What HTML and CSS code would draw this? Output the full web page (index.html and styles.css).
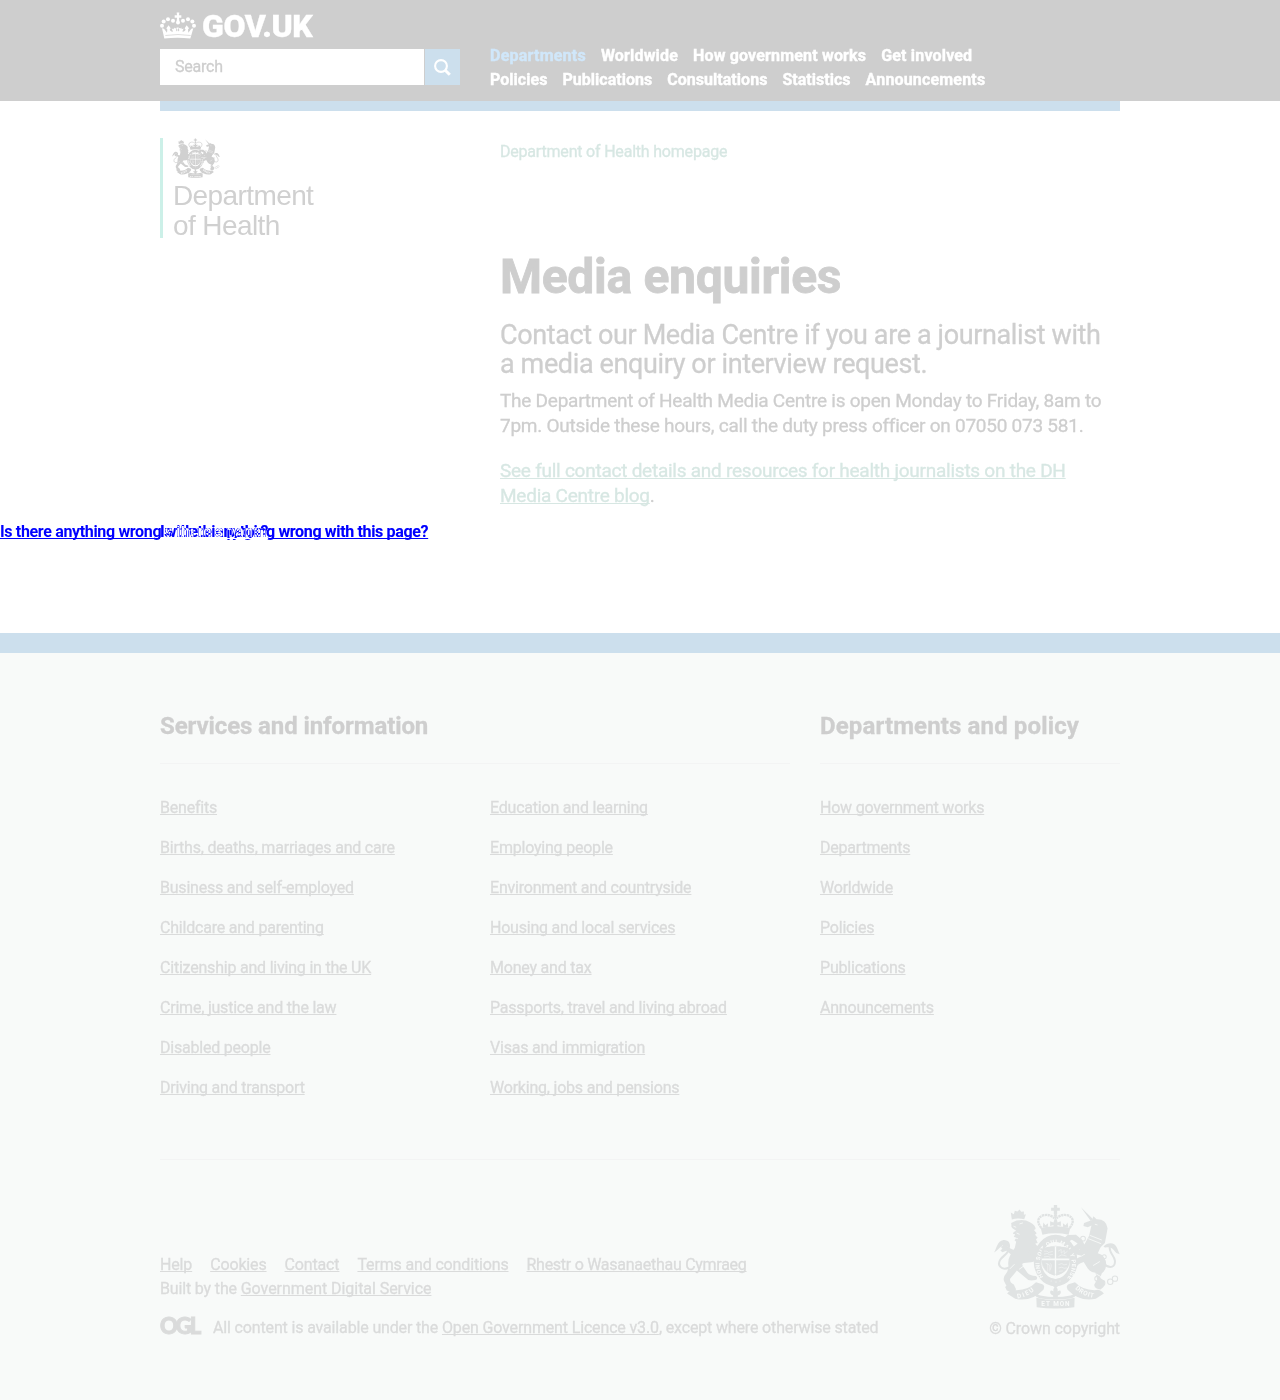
FILE: index.html
```html
<!DOCTYPE html>
<html lang="en">
<head>
<meta charset="utf-8">
<title>Media enquiries - Department of Health - GOV.UK</title>
<link rel="stylesheet" href="styles.css">
</head>
<body>
<svg class="defs" aria-hidden="true">
  <symbol id="arms" viewBox="45 27 375 312">
    <!-- crown -->
    <g fill="currentColor">
      <path d="M223 30h10v8h8v9h-8v10h-10V47h-8v-9h8z"/>
      <circle cx="228" cy="61" r="5"/>
      <path d="M184 98q44-10 88 0l-5 20q-39-8-78 0z"/>
      <path d="M225 72h7l2 10 10-4v14l-10-3v11h-12V89l-10 3V78l10 4z"/>
      <path d="M190 97l2-15 6 8 8-6-1 13zM266 97l-2-15-6 8-8-6 1 13z"/>
    </g>
    <g fill="none" stroke="currentColor" stroke-width="7" stroke-dasharray="7 1.5">
      <path d="M186 98c-16-18-10-34 8-38 14-3 25 3 31 10M270 98c16-18 10-34-8-38-14-3-25 3-31 10"/>
      <path d="M228 65v35" stroke-width="4"/>
    </g>
    <!-- lion -->
    <g fill="currentColor">
      <path d="M98 73l-3-21 9 5 3-10 8 2 6-6 5 7 8-1 0 10 6-2-5 15q-18-5-37 1z"/>
      <path d="M96 83l16-7q24-5 40 5 16 8 17 20l-5 3 8 10-5 4 8 9-5 5 5 11-7 1q8 10 4 20l-2 24q0 9-14 12l-22 2q-8 1-3 10l14 20q7 8 24 9 8 3 2 11-14 4-24 1l-34-28-5 6-15 18q-2 11 11 17l7 15q-13 10-28 3l-5-10 4-4-7-13q-4-13 5-22 9-12 8-23-3-19 6-34l13-21 4-18-5-4 5-7-7-4 4-7-7-2q1-6 10-9l-10-6q-6-6-4-9z"/>
      <path d="M104 184l-22-18-12 4-6-5 6-5-5-6 7-3-1-8 9 2 9 12 20 9z"/>
      <path d="M148 170l20-21 12 4-5 12-16 22z"/>
      <path d="M45 171c9-13 9-34 28-37 15-1 22 10 19 24-8-8-16-12-23-7-9 6-14 15-24 20z"/>
    </g>
    <path d="M92 215C65 228 54 207 64 192c9-14 29-17 24-44" fill="none" stroke="currentColor" stroke-width="6"/>
    <path class="cut" d="M121 86l10-3M103 93l8 3M112 113l9 4M105 127l11 3M142 205l-22 16M92 220l14-14" />
    <!-- unicorn -->
    <g fill="currentColor">
      <path d="M303 36l37 36-7 5z"/>
      <path d="M337 74l4-11 9 9q29-1 33 27l-4 23-4 21q-13 12-16 19l-5 11q25 7 25 35-1 16-13 25l-5 13 13 11q3 16-12 24-16 0-19-13l9-17-5-20q-14 0-23-12l-12-20q-22 5-23 24l-5 8-13-3 2-13q8-26 34-33l9-6-17-14-11 8q-15-2-9-14l15-12-17-11-16 8-6-14 9-8 25-1 18 15 7 14 14-26 7-30-11 5-13-4 2-9z"/>
      <path d="M371 153c13-13 33-13 40 4l8 19c-17-3-15-15-27-19-9-4-17 2-21-4z"/>
      <path d="M282 158l18 6 19-7 7 10-20 14-25-6z"/>
    </g>
    <path d="M371 205c22 17 35 8 34-9-1-17-20-23-15-46" fill="none" stroke="currentColor" stroke-width="6"/>
    <path class="cut" d="M330 120l36 14M326 130l38 15M345 87l8 2M340 210l20-12M349 235l16 9"/>
    <g fill="none" stroke="currentColor" stroke-width="3">
      <circle cx="352" cy="249" r="7"/><circle cx="367" cy="262" r="8"/><circle cx="391" cy="258" r="8"/><circle cx="405" cy="249" r="8"/><circle cx="310" cy="130" r="7"/><circle cx="373" cy="184" r="6"/>
    </g>
    <!-- garter and shield -->
    <ellipse cx="228" cy="195" rx="54" ry="66" fill="none" stroke="currentColor" stroke-width="22"/>
    <path id="garter" d="M194 247a48 60 0 1 1 70-1" fill="none"/>
    <text class="arms-motto"><textPath href="#garter" startOffset="4" textLength="255">HONI SOIT QUI MAL Y PENSE</textPath></text>
    <circle cx="228" cy="194" r="42" fill="none" stroke="currentColor" stroke-width="2"/>
    <g fill="currentColor">
      <path d="M190 158q18-6 36-4v35h-40q-2-19 4-31zM230 154q20-2 37 4 6 12 4 31h-41zM186 194h40v46q-34-8-40-46zM230 194h41q-5 38-41 46z"/>
      <path d="M200 243l28 8 28-8-9 21-19 12-19-12z"/>
    </g>
    <path class="cut cut-fine" d="M194 167h9l4 4 13-3M194 176l10-2 6 4 10-1M194 184l13-1 6 3M237 183l10-5 14 4M236 167l9-5v11l9-8v10l10-8M199 203l12 6v19M205 203v25M212 203q7 6 0 20M237 207l10-3 6 4 10-2M237 217l10-2 7 3 8-1M238 227l12-1M213 256h5M226 259h6M239 256h5"/>
    <!-- ribbon -->
    <g fill="currentColor">
      <path d="M84 293q13-14 23-10 39 2 63-23l12 3q18 3 10 19-35 37-84 27zM372 293q-13-14-23-10-39 2-63-23l-12 3q-18 3-10 19 35 37 84 27z"/>
      <path d="M168 281q-8 14 3 22 10 8 57 8t57-8q11-8 3-22l-8 10q3 6-7 8-45 9-90 0-10-2-7-8z"/>
      <path d="M171 306q57 13 114 0l-1 28q-56 8-112 0z"/>
      <path d="M228 270q11 12 4 22 3-10 11-7 4 10-8 14v11h-14v-11q-12-4-8-14 8-3 11 7-7-10 4-22z"/>
    </g>
    <path id="dieu" d="M115 308q31-4 54-29" fill="none"/>
    <path id="droit" d="M286 279q25 24 61 28" fill="none"/>
    <text class="arms-motto arms-ribbon"><textPath href="#dieu" textLength="56">DIEU</textPath></text>
    <text class="arms-motto arms-ribbon"><textPath href="#droit" textLength="62">DROIT</textPath></text>
    <text class="arms-motto arms-ribbon" x="186" y="329" textLength="84">ET MON</text>
  </symbol>
</svg>

<header class="header">
  <div class="wrap header-inner">
    <div class="header-left">
      <a class="logo" href="#">
        <svg class="crown" viewBox="30 36 108 80" fill="#fff">
          <path d="M80 37h8l-1 8h7v8h-7l1 10h-8l1-10h-7v-8h7z"/>
          <circle cx="84" cy="67" r="6"/><circle cx="69" cy="62" r="6"/><circle cx="54" cy="57" r="6"/><circle cx="41" cy="64" r="6"/><circle cx="36" cy="77" r="6"/><circle cx="99" cy="62" r="6"/><circle cx="114" cy="57" r="6"/><circle cx="127" cy="64" r="6"/><circle cx="132" cy="77" r="6"/>
          <path d="M36 84l6 2 9 12 1-10-3-4 7-9 6 9-3 5q3 7 10 5l-4-9 6 2 1-5 3 3 5-2-2 7 3 4q3-3-1-12h6q-4 9-1 12l3-4-2-7 5 2 3-3 1 5 6-2-4 9q7 2 10-5l-3-5 6-9 7 9-3 4 1 10 9-12 6-2-9 31q-39-4-78 0z"/>
          <path d="M46 106q38-6 76 0" fill="none" stroke="#cecece" stroke-width="2"/>
        </svg>
        <span class="logo-text">GOV.UK</span>
      </a>
      <form class="search">
        <span class="search-field">Search</span>
        <span class="search-button">
          <svg viewBox="0 0 17 17" width="17" height="17" fill="none" stroke="#fff"><circle cx="7" cy="7" r="5.9" stroke-width="2.1"/><path d="M11.2 11.2l4.6 4.6" stroke-width="3"/></svg>
        </span>
      </form>
    </div>
    <nav class="nav">
      <div class="nav-row nav-primary"><a class="active" href="#">Departments</a><a href="#">Worldwide</a><a href="#">How government works</a><a href="#">Get involved</a></div>
      <div class="nav-row"><a href="#">Policies</a><a href="#">Publications</a><a href="#">Consultations</a><a href="#">Statistics</a><a class="wide" href="#">Announcements</a></div>
    </nav>
  </div>
</header>
<div class="wrap header-bar"></div>

<main class="wrap main">
  <div class="organisation">
    <svg class="organisation-arms"><use href="#arms"/></svg>
    <span>Department<br>of Health</span>
  </div>
  <article class="content">
    <a class="home-link" href="#">Department of Health homepage</a>
    <h1>Media enquiries</h1>
    <p class="lead">Contact our Media Centre if you are a journalist with<br>a media enquiry or interview request.</p>
    <p>The Department of Health Media Centre is open Monday to Friday, 8am to<br>7pm. Outside these hours, call the duty press officer on 07050 073 581.</p>
    <p><a href="#">See full contact details and resources for health journalists on the DH<br>Media Centre blog</a>.</p>
  </article>
</main>

<div class="report">
  <a href="#">Is there anything wrong with this page?</a>
  <a class="report-overlay" href="#">Is there anything wrong with this page?</a>
</div>

<footer class="footer">
  <div class="wrap">
    <div class="footer-nav">
      <section class="services">
        <h2>Services and information</h2>
        <div class="columns">
          <ul>
            <li><a href="#">Benefits</a></li>
            <li><a href="#">Births, deaths, marriages and care</a></li>
            <li><a href="#">Business and self-employed</a></li>
            <li><a href="#">Childcare and parenting</a></li>
            <li><a href="#">Citizenship and living in the UK</a></li>
            <li><a href="#">Crime, justice and the law</a></li>
            <li><a href="#">Disabled people</a></li>
            <li><a href="#">Driving and transport</a></li>
          </ul>
          <ul>
            <li><a href="#">Education and learning</a></li>
            <li><a href="#">Employing people</a></li>
            <li><a href="#">Environment and countryside</a></li>
            <li><a href="#">Housing and local services</a></li>
            <li><a href="#">Money and tax</a></li>
            <li><a href="#">Passports, travel and living abroad</a></li>
            <li><a href="#">Visas and immigration</a></li>
            <li><a href="#">Working, jobs and pensions</a></li>
          </ul>
        </div>
      </section>
      <section class="policy">
        <h2>Departments and policy</h2>
        <ul>
          <li><a href="#">How government works</a></li>
          <li><a href="#">Departments</a></li>
          <li><a href="#">Worldwide</a></li>
          <li><a href="#">Policies</a></li>
          <li><a href="#">Publications</a></li>
          <li><a href="#">Announcements</a></li>
        </ul>
      </section>
    </div>
    <div class="footer-meta">
      <div class="meta-left">
        <div class="meta-links"><a href="#">Help</a><a href="#">Cookies</a><a href="#">Contact</a><a href="#">Terms and conditions</a><a href="#">Rhestr o Wasanaethau Cymraeg</a></div>
        <div class="built">Built by the <a href="#">Government Digital Service</a></div>
        <div class="licence"><span class="ogl">OGL</span><span>All content is available under the <a href="#">Open Government Licence v3.0</a>, except where otherwise stated</span></div>
      </div>
      <div class="copyright">
        <svg class="footer-arms"><use href="#arms"/></svg>
        <span>© Crown copyright</span>
      </div>
    </div>
  </div>
</footer>
</body>
</html>
```
FILE: styles.css
```css
* { box-sizing: border-box; }
body {
  margin: 0;
  background: #fff;
  color: #cecece;
  font: 16px/20px Roboto, Arial, sans-serif;
  letter-spacing: -0.21px;
  -webkit-text-stroke: 0.3px;
}
h1, h2, p, ul { margin: 0; padding: 0; }
ul { list-style: none; }
a {
  color: inherit;
  text-decoration: underline;
  text-decoration-thickness: 1px;
  text-decoration-skip-ink: none;
  text-underline-offset: 1px;
}
.defs { display: none; }
.wrap { width: 960px; margin: 0 auto; }

.header { height: 101px; background: #cecece; }
.header-inner { display: flex; }
.header-left { width: 330px; padding-top: 12px; }
.logo {
  display: flex;
  gap: 6px;
  height: 37px;
  color: #fff;
  text-decoration: none;
}
.crown { width: 36px; height: 27px; }
.logo-text {
  font-size: 32px;
  line-height: 28px;
  font-weight: 900;
  letter-spacing: -0.4px;
}
.search { display: flex; gap: 1px; width: 300px; height: 36px; }
.search-field {
  width: 264px;
  padding: 8px 15px;
  background: #fff;
}
.search-button {
  display: flex;
  width: 35px;
  align-items: center;
  justify-content: center;
  background: #ccdfed;
}
.nav {
  padding-top: 44px;
  color: #fff;
  font-weight: 700;
  line-height: 24px;
  letter-spacing: 0.03px;
  -webkit-text-stroke: 0.4px;
}
.nav-row { display: flex; gap: 15px; }
.nav-primary { letter-spacing: 0.17px; }
.nav a { text-decoration: none; }
.nav .active { color: #d0e7fa; letter-spacing: 0.23px; }
.nav .wide { letter-spacing: 0.17px; }
.header-bar { height: 10px; background: #ccdfed; }

.main { display: flex; height: 410px; }
.organisation {
  width: 300px;
  height: 100px;
  margin: 27px 40px 0 0;
  padding-left: 10px;
  border-left: 3px solid #ccf0e8;
  color: #d0d0d0;
  font: 28px/30px "Liberation Sans", Arial, sans-serif;
  letter-spacing: -0.6px;
  -webkit-text-stroke: 0;
}
.organisation-arms {
  display: block;
  width: 48px;
  height: 40px;
  margin: 0 0 3px -1px;
  --ground: #fff;
}
.content { width: 620px; padding-top: 31px; font-size: 19px; line-height: 25px; letter-spacing: -0.25px; }
.content a { color: #d7e7e3; }
.content .home-link {
  display: block;
  height: 110px;
  font-size: 16px;
  line-height: 20px;
  letter-spacing: -0.2px;
  text-decoration: none;
}
h1 { font-size: 48px; line-height: 50px; letter-spacing: -0.3px; -webkit-text-stroke: 0.8px; }
.content p { margin-bottom: 20px; }
.content .lead {
  margin: 19px 0 9px;
  font-size: 27px;
  line-height: 29px;
  letter-spacing: -0.38px;
}

/* Two copies of the link share one line; where they cross, the colours cancel out. */
.report {
  display: grid;
  height: 112px;
  font-weight: 700;
  letter-spacing: -0.34px;
  -webkit-text-stroke: 0;
}
.report a { grid-area: 1 / 1; justify-self: start; color: #00f; height: 20px; margin-top: 1px; }
.report .report-overlay { margin-left: 160px; color: #ff0; mix-blend-mode: difference; }

.footer {
  height: 767px;
  padding-top: 58px;
  border-top: 20px solid #ccdfed;
  background: #f8faf9;
  color: #dadbdb;
}
.footer-nav { display: flex; gap: 30px; height: 449px; border-bottom: 1px solid #f3f4f4; }
.services { width: 630px; }
.policy { width: 300px; }
h2 {
  height: 53px;
  margin-bottom: 34px;
  border-bottom: 1px solid #f3f4f4;
  color: #cecece;
  font-size: 24px;
  line-height: 30px;
  letter-spacing: -0.1px;
}
.policy h2 { letter-spacing: 0.13px; }
.columns { display: grid; grid-template-columns: 330px 300px; }
li { height: 40px; }
.footer-meta { display: flex; justify-content: space-between; padding-top: 44px; letter-spacing: -0.15px; }
.meta-left { padding-top: 49px; line-height: 24px; }
.meta-links { display: flex; gap: 18px; }
.built a { letter-spacing: -0.05px; }
.meta-links a:last-child { letter-spacing: -0.27px; }
.licence { display: flex; height: 20px; margin-top: 16px; line-height: 22px; white-space: nowrap; }
.ogl {
  width: 53px;
  font: 900 22px/18px Lato, sans-serif;
  letter-spacing: -2px;
  -webkit-text-stroke: 1px;
}
.copyright { display: flex; flex-direction: column; align-items: flex-end; letter-spacing: -0.1px; }
.footer-arms {
  width: 126px;
  height: 105px;
  margin-bottom: 10px;
  color: #e0e3e3;
  --ground: #f8faf9;
}
.cut { fill: none; stroke: var(--ground); stroke-width: 2.5; }
.cut-fine { stroke-width: 1.5; }
.arms-motto { fill: var(--ground); font: 700 17px Roboto, sans-serif; letter-spacing: 0; -webkit-text-stroke: 0; }
.arms-ribbon { font-size: 19px; }
```
